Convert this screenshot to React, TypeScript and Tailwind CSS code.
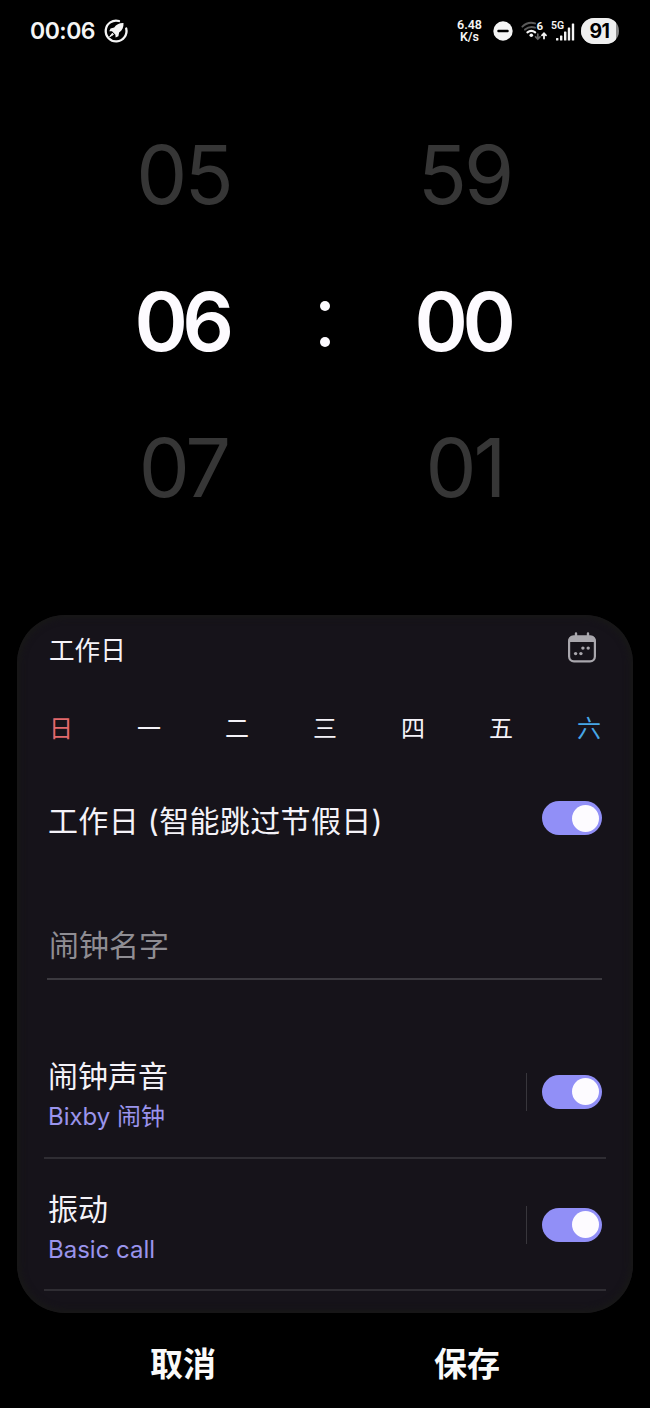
import { useState } from 'react';

type Weekday = { label: string; color: string };

const weekdays: Weekday[] = [
  { label: '日', color: 'text-[#e2696c]' },
  { label: '一', color: 'text-[#f4f2f8]' },
  { label: '二', color: 'text-[#f4f2f8]' },
  { label: '三', color: 'text-[#f4f2f8]' },
  { label: '四', color: 'text-[#f4f2f8]' },
  { label: '五', color: 'text-[#f4f2f8]' },
  { label: '六', color: 'text-[#46a6e6]' },
];

function Toggle({ on, onChange }: { on: boolean; onChange: () => void }) {
  return (
    <button
      type="button"
      role="switch"
      aria-checked={on}
      onClick={onChange}
      className={`flex h-[34px] w-[60px] shrink-0 items-center rounded-full px-[3px] ${
        on ? 'justify-end bg-[#918ff7]' : 'justify-start bg-[#4a4850]'
      }`}
    >
      <span className="h-[27px] w-[27px] rounded-full bg-[#fdfbff]" />
    </button>
  );
}

function StatusBar() {
  return (
    <header className="flex h-[61px] items-center justify-between pl-[30px] pr-[31px] text-[#f5f5f5]">
      <div className="flex items-center gap-[7px]">
        <span className="w-[66px] pt-[2px] text-[23px] leading-none font-semibold tracking-[-0.5px]">00:06</span>
        <svg width="26" height="26" viewBox="0 0 26 26" fill="none">
          <path d="M16 3A10.4 10.4 0 1 0 23.2 10.5" stroke="#f5f5f5" strokeWidth="2.3" strokeLinecap="round" />
          <path d="M20.5 5C16.5 4.8 13.3 6.4 11.2 9.6L7.5 10.4 6.3 13.2 9 13.3 12.4 16.8 12.6 19.5 15.4 18.2 16.1 14.5C19.4 12.3 20.8 9 20.5 5Z" fill="#f5f5f5" />
          <path d="M9.4 15.2L6.6 18.8 10.4 16.6Z" fill="#f5f5f5" stroke="#f5f5f5" />
        </svg>
      </div>
      <div className="flex items-center">
        <div className="w-[27px] text-center font-[Roboto] text-[12.5px] leading-[11.5px] font-semibold">
          <div>6.48</div>
          <div>K/s</div>
        </div>
        <svg className="ml-[10px]" width="20" height="20" viewBox="0 0 20 20">
          <circle cx="10" cy="10" r="9.7" fill="#f5f5f5" />
          <rect x="4.3" y="8.8" width="11.4" height="2.4" rx="1" fill="#000" />
        </svg>
        <svg className="ml-[8px]" width="27" height="22" viewBox="0 0 27 22" fill="none" strokeLinecap="round">
          <path d="M1.4 6.6Q7 1.2 14 3.4" stroke="#5b5b5b" strokeWidth="2" />
          <path d="M4 9.6Q8.8 5.6 14 7.6" stroke="#5b5b5b" strokeWidth="2" />
          <path d="M6.4 12.4Q10.3 9.4 14.2 12.4" stroke="#f5f5f5" strokeWidth="2.1" />
          <circle cx="10.3" cy="15.2" r="1.8" fill="#f5f5f5" />
          <path d="M16.8 14V18.6M14.6 16.8L16.8 19 19 16.8" stroke="#666" strokeWidth="1.7" />
          <path d="M23 18.6V13.6M21 15.3L23 13.2 25 15.3" stroke="#f5f5f5" strokeWidth="1.8" />
          <text x="15.6" y="9.8" fill="#f5f5f5" fontSize="11.5" fontWeight="700" fontFamily="Roboto, sans-serif">6</text>
        </svg>
        <svg className="ml-[3px]" width="24" height="22" viewBox="0 0 24 22">
          <text x="0" y="9.2" fill="#f5f5f5" fontSize="10.5" fontWeight="600" fontFamily="Roboto, sans-serif">5G</text>
          <rect x="5" y="18" width="2.4" height="2.6" rx="0.6" fill="#f5f5f5" />
          <rect x="9" y="15.5" width="2.4" height="5.1" rx="0.6" fill="#f5f5f5" />
          <rect x="13" y="11.5" width="2.4" height="9.1" rx="0.6" fill="#f5f5f5" />
          <rect x="16.8" y="7.5" width="2.4" height="13.1" rx="0.6" fill="#f5f5f5" />
          <rect x="20.8" y="3.5" width="2.4" height="17.1" rx="0.6" fill="#f5f5f5" />
        </svg>
        <div className="ml-[6px] flex h-[26px] w-[38px] overflow-hidden rounded-full bg-[#8a8a8a]">
          <div className="flex w-[35px] items-center justify-center bg-[#efefef] pl-[2px] pt-[2px] text-[19.5px] leading-none font-bold tracking-[-0.5px] text-black">
            91
          </div>
        </div>
      </div>
    </header>
  );
}

function PickerColumn({ values }: { values: string[] }) {
  return (
    <div className="flex w-[110px] flex-col text-center text-[81px] leading-[146.5px]">
      <div className="mr-[2px] h-[146.5px] tracking-[-3px] text-[#363636]">{values[0]}</div>
      <div className="mr-[6px] h-[146.5px] font-semibold tracking-[-5.5px] text-[#fdfbff]">{values[1]}</div>
      <div className="mr-[2px] h-[146.5px] tracking-[-3px] text-[#363636]">{values[2]}</div>
    </div>
  );
}

function CalendarIcon() {
  return (
    <svg className="mb-[3px]" width="30" height="31" viewBox="0 0 30 31" fill="none">
      <rect x="2.1" y="4.6" width="25.8" height="24.8" rx="4.8" stroke="#a9a7ad" strokeWidth="2.2" />
      <path d="M1.2 10V8.5A5 5 0 0 1 6.2 3.6H23.8A5 5 0 0 1 28.8 8.5V10Z" fill="#a9a7ad" />
      <path d="M9 1.5V5M21 1.5V5" stroke="#a9a7ad" strokeWidth="2.4" strokeLinecap="round" />
      <circle cx="15.9" cy="16.1" r="1.7" fill="#a9a7ad" />
      <circle cx="21.2" cy="16.1" r="1.7" fill="#a9a7ad" />
      <circle cx="8.6" cy="21.6" r="1.7" fill="#a9a7ad" />
      <circle cx="13.9" cy="21.6" r="1.7" fill="#a9a7ad" />
    </svg>
  );
}

function SettingRow({ title, value, on, onChange }: { title: string; value: string; on: boolean; onChange: () => void }) {
  return (
    <div className="flex items-center justify-between pl-[4px] pr-1">
      <div>
        <div className="text-[30px] leading-[41px] text-[#f4f2f8]">{title}</div>
        <div className="text-[24px] leading-[40px] text-[#9a94ec]">{value}</div>
      </div>
      <div className="mb-[10px] flex items-center gap-[15px]">
        <span className="h-[38px] w-px bg-[#38363c]" />
        <Toggle on={on} onChange={onChange} />
      </div>
    </div>
  );
}

export default function App() {
  const [workday, setWorkday] = useState(true);
  const [sound, setSound] = useState(true);
  const [vibrate, setVibrate] = useState(true);

  return (
    <div className="flex h-[1408px] w-[650px] flex-col overflow-hidden bg-black font-[Inter,'Noto_Sans_CJK_SC',sans-serif]">
      <StatusBar />

      {/* Time picker */}
      <section className="flex h-[554px] justify-center pt-[41px]">
        <PickerColumn values={['05', '06', '07']} />
        <div className="flex w-[171px] flex-col items-center gap-[26px] pt-[199px]">
          <span className="h-[10px] w-[10px] rounded-full bg-[#fdfbff]" />
          <span className="h-[10px] w-[10px] rounded-full bg-[#fdfbff]" />
        </div>
        <PickerColumn values={['59', '00', '01']} />
      </section>

      {/* Alarm options */}
      <main className="mx-[17px] h-[698px] rounded-[48px] bg-[#16131a] px-[27px] shadow-[inset_0_0_6px_3px_#181817]">
        <div className="flex h-[68px] items-center justify-between pl-[5px] pr-[9px]">
          <span className="pt-[4px] text-[25.6px] leading-none text-[#f4f2f8]">工作日</span>
          <CalendarIcon />
        </div>

        <div className="flex h-[88px] items-center justify-between pl-[5px] pr-[5px] pt-[3px]">
          {weekdays.map((day) => (
            <span key={day.label} className={`w-6 text-center text-[24px] leading-none ${day.color}`}>
              {day.label}
            </span>
          ))}
        </div>

        <div className="flex h-[94px] items-center justify-between pl-[4px] pr-1">
          <span className="pt-[5px] text-[30px] leading-none tracking-[0.35px] text-[#f4f2f8]">工作日 (智能跳过节假日)</span>
          <Toggle on={workday} onChange={() => setWorkday(!workday)} />
        </div>

        <div className="ml-[3px] mr-[4px] mt-[47px] flex h-[68px] items-center border-b-2 border-[#3b393f] pl-[2px] text-[30px] leading-none text-[#8f8d93]">
          闹钟名字
        </div>

        <div className="flex h-[179px] flex-col justify-end border-b-2 border-[#2f2d33] pb-[20px]">
          <SettingRow title="闹钟声音" value="Bixby 闹钟" on={sound} onChange={() => setSound(!sound)} />
        </div>
        <div className="flex h-[132px] flex-col justify-end border-b-2 border-[#2f2d33] pb-[19px]">
          <SettingRow title="振动" value="Basic call" on={vibrate} onChange={() => setVibrate(!vibrate)} />
        </div>
      </main>

      <footer className="flex h-[95px] items-center justify-center gap-[218px] pt-[8px] text-[33px] font-bold text-[#fafafa]">
        <button type="button">取消</button>
        <button type="button">保存</button>
      </footer>
    </div>
  );
}
